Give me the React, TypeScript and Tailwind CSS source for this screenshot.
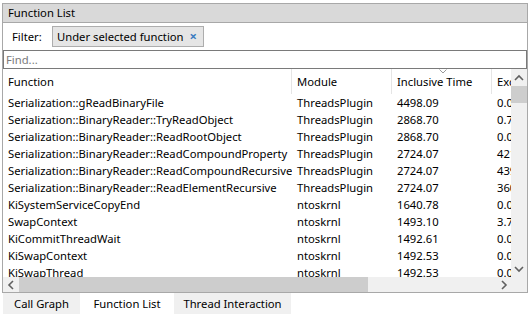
import React from 'react';

type Row = { fn: string; mod: string; incl: string; excl: string };

const rows: Row[] = [
  { fn: 'Serialization::gReadBinaryFile', mod: 'ThreadsPlugin', incl: '4498.09', excl: '0.00' },
  { fn: 'Serialization::BinaryReader::TryReadObject', mod: 'ThreadsPlugin', incl: '2868.70', excl: '0.77' },
  { fn: 'Serialization::BinaryReader::ReadRootObject', mod: 'ThreadsPlugin', incl: '2868.70', excl: '0.00' },
  { fn: 'Serialization::BinaryReader::ReadCompoundProperty', mod: 'ThreadsPlugin', incl: '2724.07', excl: '421.52' },
  { fn: 'Serialization::BinaryReader::ReadCompoundRecursive', mod: 'ThreadsPlugin', incl: '2724.07', excl: '439.18' },
  { fn: 'Serialization::BinaryReader::ReadElementRecursive', mod: 'ThreadsPlugin', incl: '2724.07', excl: '360.44' },
  { fn: 'KiSystemServiceCopyEnd', mod: 'ntoskrnl', incl: '1640.78', excl: '0.00' },
  { fn: 'SwapContext', mod: 'ntoskrnl', incl: '1493.10', excl: '3.72' },
  { fn: 'KiCommitThreadWait', mod: 'ntoskrnl', incl: '1492.61', excl: '0.00' },
  { fn: 'KiSwapContext', mod: 'ntoskrnl', incl: '1492.53', excl: '0.00' },
  { fn: 'KiSwapThread', mod: 'ntoskrnl', incl: '1492.53', excl: '0.00' },
];

function Chevron({ dir }: { dir: 'up' | 'down' | 'left' | 'right' }) {
  const pts = {
    up: '1,6 5,2 9,6',
    down: '1,2 5,6 9,2',
    left: '6,1 2,5 6,9',
    right: '3,1 7,5 3,9',
  }[dir];
  const vertical = dir === 'up' || dir === 'down';
  return (
    <svg width={vertical ? 10 : 9} height={vertical ? 8 : 10} viewBox={vertical ? '0 0 10 8' : '0 0 9 10'}>
      <polyline points={pts} fill="none" stroke="#606060" strokeWidth="1.6" />
    </svg>
  );
}

function Cells({ r }: { r: Row }) {
  return (
    <div className="flex h-[17px] leading-[17px] whitespace-nowrap text-black">
      <div className="w-[289px] shrink-0 overflow-hidden pl-[5px]">{r.fn}</div>
      <div className="w-[100px] shrink-0 overflow-hidden pl-[5px]">{r.mod}</div>
      <div className="w-[100px] shrink-0 overflow-hidden pl-[5px]">{r.incl}</div>
      <div className="w-[19px] shrink-0 overflow-hidden pl-[5px]">{r.excl}</div>
    </div>
  );
}

export default function App() {
  return (
    <div className="w-[530px] h-[314px] bg-white overflow-hidden font-['Noto_Sans',sans-serif] text-[11.25px] leading-none">
      <div className="mt-[3px] ml-[2px] w-[526px] h-[290px] border border-[#a8a8a8] flex flex-col">
        {/* title */}
        <div className="h-[19px] shrink-0 bg-[#d9d9d9] border-b border-[#a8a8a8] flex items-center pl-[5px] text-black">
          Function List
        </div>

        {/* filter */}
        <div className="h-[27px] shrink-0 flex items-center">
          <span className="ml-[9px] w-[40px] text-black">Filter:</span>
          <div className="h-[21px] w-[152px] bg-[#e5e5e5] border border-[#adadad] flex items-center pl-[4px] text-black whitespace-nowrap">
            <span>Under selected function</span>
            <span className="ml-auto mr-[6px] text-[#3a7cc0] text-[13px] font-bold">×</span>
          </div>
        </div>

        {/* find box */}
        <div className="h-[19px] shrink-0 border border-[#7a7a7a] flex items-center pl-[2px] text-[#7a7a7a]">
          Find...
        </div>

        {/* table */}
        <div className="flex-1 flex flex-col min-h-0">
          <div className="flex-1 flex min-h-0">
            <div className="flex-1 overflow-hidden">
              <div className="relative flex h-[25px] items-center whitespace-nowrap text-black">
                <div className="w-[289px] shrink-0 h-full flex items-center border-r border-[#e5e5e5] pl-[5px]">Function</div>
                <div className="w-[100px] shrink-0 h-full flex items-center border-r border-[#e5e5e5] pl-[5px]">Module</div>
                <div className="relative w-[100px] shrink-0 h-full flex items-center border-r border-[#e5e5e5] pl-[5px]">
                  Inclusive Time
                  <svg className="absolute left-[47px] top-0" width="8" height="5" viewBox="0 0 8 5">
                    <polyline points="0.5,0.5 4,4 7.5,0.5" fill="none" stroke="#9a9a9a" strokeWidth="1" />
                  </svg>
                </div>
                <div className="w-[19px] shrink-0 h-full flex items-center overflow-hidden pl-[5px]">Exclusive</div>
              </div>
              {rows.map((r, i) => (
                <Cells key={i} r={r} />
              ))}
            </div>
            {/* vertical scrollbar */}
            <div className="w-[16px] shrink-0 bg-[#f0f0f0] flex flex-col items-center">
              <div className="h-[17px] flex items-center justify-center">
                <Chevron dir="up" />
              </div>
              <div className="w-[16px] h-[17px] bg-[#cdcdcd]" />
              <div className="flex-1" />
              <div className="h-[17px] flex items-center justify-center">
                <Chevron dir="down" />
              </div>
            </div>
          </div>
          {/* horizontal scrollbar */}
          <div className="h-[15px] shrink-0 flex bg-[#f0f0f0]">
            <div className="w-[16px] flex items-center justify-center">
              <Chevron dir="left" />
            </div>
            <div className="w-[349px] bg-[#cdcdcd]" />
            <div className="flex-1" />
            <div className="w-[16px] flex items-center justify-center">
              <Chevron dir="right" />
            </div>
            <div className="w-[16px] bg-[#f0f0f0]" />
          </div>
        </div>
      </div>

      {/* tabs */}
      <div className="ml-[3px] h-[21px] flex text-black">
        <div className="w-[77px] h-full bg-[#f0f0f0] flex items-center justify-center">Call Graph</div>
        <div className="w-[94px] h-full bg-white flex items-center justify-center">Function List</div>
        <div className="w-[117px] h-full bg-[#f0f0f0] flex items-center justify-center">Thread Interaction</div>
      </div>
    </div>
  );
}
